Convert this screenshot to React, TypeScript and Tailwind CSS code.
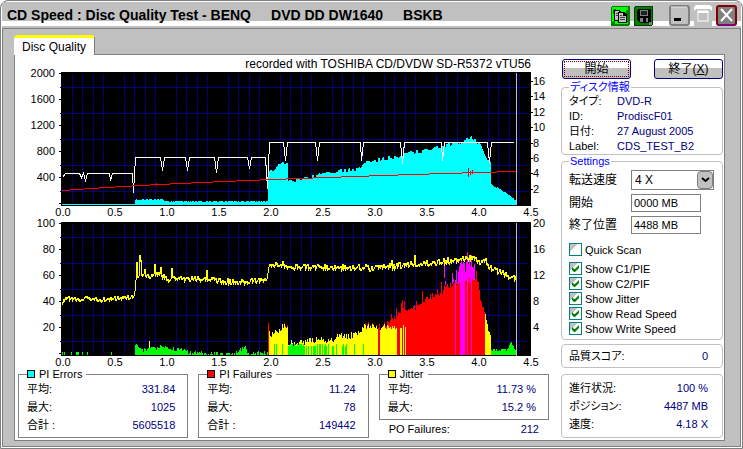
import { useState, type ReactNode } from "react";

type Point = [number, number];

const noise = (n: number) => {
  const s = Math.sin(n * 127.1 + 11.7) * 43758.5453;
  return s - Math.floor(s);
};

const sample = (points: Point[], x: number) => {
  for (let i = 1; i < points.length; i++) {
    const [x1, y1] = points[i];
    if (x <= x1) {
      const [x0, y0] = points[i - 1];
      return y0 + ((y1 - y0) * (x - x0)) / Math.max(1, x1 - x0);
    }
  }
  return points[points.length - 1][1];
};

const PLOT_LEFT = 62;
const PLOT_END = 516;
const TOP_BASE = 205;
const BOTTOM_BASE = 355;

const piErrors: Point[] = [
  [62, 204], [134, 204], [135, 200], [163, 200], [164, 202], [267, 202], [268, 172], [274, 171],
  [278, 166], [287, 162], [288, 182], [292, 181], [300, 179], [310, 177], [320, 174], [330, 172],
  [340, 171], [350, 170], [358, 168], [365, 162], [375, 161], [385, 158], [393, 158], [400, 155],
  [420, 151], [435, 148], [450, 144], [460, 142], [465, 140], [471, 137], [475, 140], [480, 146],
  [485, 155], [490, 164], [491, 185], [495, 188], [500, 190], [508, 196], [516, 201],
];

const writeSpeed =
  "62,177 65,173 79,173 81,177 83,173 85,180 87,173 109,173 110,180 112,173 132,173 133,192 135,157 160,157 162,170 164,157 185,157 187,170 189,157 214,157 216,172 218,157 247,157 249,168 251,157 265,157 267,188 269,142 283,142 285,160 287,142 315,142 317,160 319,142 360,142 361,160 363,142 400,142 402,163 404,142 441,142 442,160 444,142 487,142 489,162 491,142 513,142";

const readSpeed: Point[] = [
  [62, 190], [90, 188], [122, 186], [159, 184], [201, 182], [247, 180], [298, 178], [354, 176],
  [412, 174], [478, 172], [515, 171],
];

const jitter: Point[] = [
  [62, 301], [66, 298], [90, 298], [100, 299], [133, 296], [136, 276], [145, 276], [155, 273],
  [160, 273], [166, 280], [171, 276], [180, 278], [210, 278], [222, 281], [245, 281], [266, 280],
  [268, 266], [275, 264], [290, 266], [330, 267], [380, 267], [400, 265], [430, 262], [450, 260],
  [470, 257], [480, 260], [485, 261], [492, 269], [500, 272], [505, 274], [516, 278],
];

const jitterPeaks: Record<number, number> = {
  136: 262, 139: 255, 140: 260, 144: 269, 154: 264, 160: 267, 171: 268, 206: 270, 282: 261,
  391: 260, 414: 255, 469: 255,
};

const failures: Point[] = [
  [268, 330], [269, 333], [274, 334], [280, 328], [287, 325], [288, 344], [303, 342], [310, 340],
  [330, 340], [340, 336], [350, 336], [360, 331], [366, 325], [380, 327], [388, 322], [395, 316],
  [400, 311], [415, 308], [420, 302], [430, 296], [440, 295], [445, 287], [455, 282], [465, 279],
  [473, 277], [478, 285], [480, 300], [485, 312], [487, 325], [490, 332],
];

const lowFailures: Point[] = [
  [134, 355], [135, 344], [140, 349], [145, 350], [150, 347], [155, 349], [160, 345], [170, 348],
  [175, 350], [185, 349], [188, 353], [222, 353], [236, 352], [245, 347], [247, 353], [262, 353],
];

const peakFailures: Record<number, number> = {
  444: 264, 445: 285, 452: 273, 453: 279, 455: 280, 456: 270, 457: 282, 458: 272, 459: 266,
  460: 263, 461: 260, 462: 264, 463: 262, 464: 263, 465: 272, 466: 262, 467: 252, 468: 264,
  469: 260, 470: 266, 471: 255, 472: 267, 473: 268, 474: 264,
};

const greenFront = new Set([274, 276, 282, 328, 332, 333, 336, 342, 343, 345, 346, 354, 363]);
const fullMagenta = new Set([455, 460, 461, 462, 463, 464, 467, 471]);
const redFront = new Set([268, 378, 379, 397, 398, 399, 402, 404]);

const bar = (x: number, top: number, bottom: number) => `M${x} ${Math.round(top)}V${bottom}`;

function buildErrors() {
  let d = "";
  for (let x = PLOT_LEFT; x < PLOT_END; x++) {
    const rough = x > 267 && x < 491 ? (noise(x >> 1) - 0.5) * 4 : x > 134 ? -noise(x) * 1.4 : 0;
    d += bar(x, sample(piErrors, x) + rough, TOP_BASE);
  }
  return d;
}

function buildFailures() {
  const out = { green: "", yellow: "", red: "", magenta: "" };
  for (let x = 62; x < PLOT_END; x++) {
    const r = noise(x * 3);
    if (x < 135) {
      if ([62, 64, 71, 76, 77, 78, 82, 87, 111].includes(x)) out.green += bar(x, 352, BOTTOM_BASE);
    } else if (x < 268) {
      if (x < 218 || x > 235 || r > 0.5) {
        out.green += bar(x, sample(lowFailures, x) + (r - 0.5) * 4, BOTTOM_BASE);
      }
    } else if (x > 490) {
      const hump = Math.abs(x - 511) < 4 ? (4 - Math.abs(x - 511)) * 2 : 0;
      out.green += bar(x, 350 - hump + (r - 0.5) * 3, BOTTOM_BASE);
    } else {
      const spike = noise(x * 7) > 0.8 && x > 388 && x < 478 ? 9 : 0;
      const top = x === 268 ? 323 : sample(failures, x) + (r - 0.5) * 7 - spike;
      const yellow = (x < 406 && !redFront.has(x)) || x > 484;
      const yellowTop = x < 406 ? Math.max(top, 324 + Math.round(r * 5)) : top;
      if (!yellow || top < yellowTop) out.red += bar(x, top, BOTTOM_BASE);
      if (yellow) out.yellow += bar(x, yellowTop, BOTTOM_BASE);
      const green = (x > 287 && x < 304) || (x > 303 && x < 327 && r > 0.35) || greenFront.has(x);
      if (green) out.green += bar(x, 344 + (r > 0.6 ? 2 : 0), BOTTOM_BASE);
      const peak = peakFailures[x];
      if (peak) out.magenta += bar(x, peak, fullMagenta.has(x) ? BOTTOM_BASE : Math.round(278 + r * 6));
    }
  }
  out.yellow += bar(149, 341, 350);
  return out;
}

function buildJitter() {
  let d = "";
  let prev = 302;
  for (let x = PLOT_LEFT; x < PLOT_END; x++) {
    const size = x < 134 ? 4 : 6;
    const y = Math.round(jitterPeaks[x] ?? sample(jitter, x) + (noise(x * 5) - 0.5) * size);
    d += `M${x} ${Math.min(prev, y)}V${Math.max(prev, y + 2)}`;
    prev = y;
  }
  return d;
}

function buildReadSpeed() {
  let d = "";
  for (let x = PLOT_LEFT; x < PLOT_END; x++) {
    const y = Math.round(sample(readSpeed, x));
    d += `M${x} ${y}v1`;
  }
  return d;
}

const errorsPath = buildErrors();
const failurePaths = buildFailures();
const jitterPath = buildJitter();
const readPath = buildReadSpeed();

const columns = Array.from({ length: 45 }, (_, i) => i).filter((i) => i % 5 !== 0);
const rows = [0, 1, 2, 3, 4, 5];

function Grid({ top }: { top: number }) {
  return (
    <g shapeRendering="crispEdges">
      <rect x="61" y={top} width="470" height="134" fill="#000" />
      {columns.map((i) => (
        <rect key={i} x={Math.floor(62 + i * 10.4)} y={top + 2} width="1" height="131" fill="#000080" />
      ))}
      {rows.map((i) => (
        <g key={i}>
          <rect x="59" y={top + 1 + i * 26} width="472" height="1" fill="#000" />
          {i < 5 && <rect x="60" y={top + 15 + i * 26} width="469" height="1" fill="#000080" />}
        </g>
      ))}
    </g>
  );
}

function AxisX({ y }: { y: number }) {
  return (
    <g textAnchor="middle">
      {["0.0", "0.5", "1.0", "1.5", "2.0", "2.5", "3.0", "3.5", "4.0", "4.5"].map((t, i) => (
        <text key={t} x={63 + i * 52} y={y}>
          {t}
        </text>
      ))}
    </g>
  );
}

function Charts() {
  return (
    <svg
      viewBox="15 55 546 313"
      className="block w-full overflow-visible fill-black"
      role="img"
      aria-label="PI Errors, PI Failures and Jitter"
    >
      <text x="531" y="68" textAnchor="end" className="text-xs">
        recorded with TOSHIBA CD/DVDW SD-R5372 vTU56
      </text>
      <Grid top={72} />
      <Grid top={222} />
      <g textAnchor="end">
        {["2000", "1600", "1200", "800", "400"].map((t, i) => (
          <text key={t} x="55" y={77 + i * 26}>{t}</text>
        ))}
        {["100", "80", "60", "40", "20"].map((t, i) => (
          <text key={t} x="55" y={227 + i * 26}>{t}</text>
        ))}
      </g>
      {["16", "14", "12", "10", "8", "6", "4", "2"].map((t, i) => (
        <g key={t}>
          <rect x="531" y={Math.round(81 + i * 15.4)} width="2" height="1" />
          <text x="533" y={Math.round(85 + i * 15.4)}>{t}</text>
        </g>
      ))}
      {["20", "16", "12", "8", "4"].map((t, i) => (
        <text key={t} x="533" y={227 + i * 26}>{t}</text>
      ))}
      <AxisX y={216} />
      <AxisX y={366} />
      <g fill="none" strokeWidth="1" shapeRendering="crispEdges" transform="translate(0.5 0)">
        <path d={errorsPath} stroke="#00ffff" />
        <polyline points={writeSpeed} stroke="#fff" transform="translate(0 0.5)" />
        <path d={readPath} stroke="#ff0000" />
        <path d="M468 168V177M470 171V175M472 170V174M156 183V186" stroke="#ff0000" />
        <path d={failurePaths.red} stroke="#ff0000" />
        <path d={failurePaths.yellow} stroke="#ffff00" />
        <path d={failurePaths.green} stroke="#00ff00" />
        <path d={failurePaths.magenta} stroke="#ff00ff" />
        <path d={jitterPath} stroke="#ffff00" />
        <path d="M516 73V205M516 223V356" stroke="#c0c0c0" />
      </g>
    </svg>
  );
}

function Stat({ label, value }: { label: string; value: string }) {
  return (
    <div className="flex h-[18px] items-center justify-between">
      <dt>{label}</dt>
      <dd className="text-[#000080]">{value}</dd>
    </div>
  );
}

function StatBox({ title, swatch, children }: { title: string; swatch: string; children: ReactNode }) {
  return (
    <fieldset className="min-w-0 border border-[#808080] px-2 pb-[3px]">
      <legend className="flex h-3 items-center gap-1 pr-1">
        <span className={`size-2 border border-black ${swatch}`} />
        {title}
      </legend>
      <dl className="pr-1">{children}</dl>
    </fieldset>
  );
}

function Group({ title, className, children }: { title?: string; className: string; children: ReactNode }) {
  return (
    <fieldset className={`min-w-0 rounded-[4px] border border-[#c0c0c0] pl-[7px] pr-2 ${className}`}>
      {title && <legend className="h-3 px-px text-[#0000ff]">{title}</legend>}
      {children}
    </fieldset>
  );
}

function Info({ label, value }: { label: string; value: string }) {
  return (
    <div className="flex h-[15px] items-center">
      <dt className="w-12">{label}</dt>
      <dd className="whitespace-nowrap text-[#000080]">{value}</dd>
    </div>
  );
}

function Check({ label, initial = true }: { label: string; initial?: boolean }) {
  const [on, setOn] = useState(initial);
  return (
    <label className="flex h-[15px] items-center gap-[3px]">
      <span className="grid size-[13px]">
        <input
          type="checkbox"
          checked={on}
          onChange={() => setOn(!on)}
          className="col-start-1 row-start-1 size-[13px] appearance-none border border-[#008080] bg-white bg-linear-to-br from-[#c0c0c0] from-35% to-white to-35%"
        />
        {on && (
          <svg
            viewBox="0 0 13 13"
            className="pointer-events-none col-start-1 row-start-1 size-[13px]"
            aria-hidden="true"
          >
            <path d="M3 5v3l2 2h1l4-4V3L6 7H5z" fill="#008000" />
          </svg>
        )}
      </span>
      {label}
    </label>
  );
}

function PushButton({ focused, children }: { focused?: boolean; children: ReactNode }) {
  return (
    <button
      type="button"
      className="h-5 w-[69px] rounded-[3px] border border-[#000080] bg-linear-to-b from-white from-45% to-[#c0c0c0] to-45% p-px text-xs leading-3"
    >
      <span
        className={`flex h-full items-center justify-center border ${focused ? "border-dotted border-[#800000]" : "border-transparent"}`}
      >
        {children}
      </span>
    </button>
  );
}

function TitleBar() {
  return (
    <header className="mb-[2px] flex h-6 items-start justify-between border-b-[5px] border-white bg-[#c0c0c0] pl-[5px] pr-1">
      <h1 className="flex items-center gap-5 whitespace-nowrap pt-[5px] text-sm leading-4 font-bold">
        <span>CD Speed : Disc Quality Test - BENQ</span>
        <span>DVD DD DW1640</span>
        <span>BSKB</span>
      </h1>
      <div className="flex pt-[3px]">
        <button type="button" aria-label="Copy" className="mr-1">
          <svg viewBox="0 0 19 20" className="h-5 w-[19px]" shapeRendering="crispEdges">
            <rect width="19" height="20" rx="2" fill="#008000" />
            <path d="M1 1h16v3h-2v12h2v2H3l-2-2z" fill="#00ff00" />
            <path d="M2 3h3v1H3v4H2zM1 16l3-2v4z" fill="#008000" />
            <path d="M3 4h5l2 2v9H3z" fill="#000" />
            <path d="M4 5h4v9H4z" fill="#c0c0c0" />
            <path d="M7 6h6l3 3v8H7z" fill="#000" />
            <path d="M8 7h4v3h3v6H8z" fill="#c0c0c0" />
            <path d="M9 9h2v1H9zM9 11h5v1H9zM9 13h5v1H9zM5 7h2v1H5zM5 9h2v1H5z" fill="#404040" />
          </svg>
        </button>
        <button type="button" aria-label="Save" className="mr-4">
          <svg viewBox="0 0 19 20" className="h-5 w-[19px]" shapeRendering="crispEdges">
            <rect width="19" height="20" rx="2" fill="#004000" />
            <rect x="1" y="1" width="17" height="18" fill="#008000" />
            <path d="M4 3h13v14H6l-3-3V4z" fill="#000" />
            <path d="M6 4h8v6H6zM6 12h3v4H6zM12 12h2v4h-2zM15 16h3v3h-3z" fill="#808080" />
            <path d="M7 5h6v4H7z" fill="#202020" />
          </svg>
        </button>
        <button type="button" aria-label="Minimize" className="mr-1">
          <svg viewBox="0 0 21 21" className="size-[21px]">
            <rect x="1" y="1" width="19" height="19" rx="2" fill="#c0c0c0" stroke="#808080" strokeWidth="2" />
            <path d="M2 2h16" stroke="#e8e8e8" />
            <rect x="5" y="13" width="7" height="3" />
          </svg>
        </button>
        <button type="button" aria-label="Maximize" className="mr-1">
          <svg viewBox="0 0 18 21" className="h-[21px] w-[18px]">
            <rect y="2" width="18" height="19" fill="#c0c0c0" />
            <path d="M0 6V2l2-2h14l2 2v4l-2-2H2z" fill="#fff" />
            <rect x="4" y="6" width="10" height="10" fill="#c0c0c0" stroke="#fff" />
            <path d="M4 7h10" stroke="#fff" strokeWidth="2" />
          </svg>
        </button>
        <button type="button" aria-label="Close">
          <svg viewBox="0 0 21 21" className="size-[21px]">
            <rect x="1" y="1" width="19" height="19" rx="2" fill="#808080" stroke="#800000" strokeWidth="2" />
            <path d="M2 20h17" stroke="#800080" strokeWidth="2" />
            <path d="M5 4l11 12M16 4L5 16" stroke="#fff" strokeWidth="2" />
          </svg>
        </button>
      </div>
    </header>
  );
}

export default function App() {
  const [speed, setSpeed] = useState("4 X");
  return (
    <div className="flex min-h-screen flex-col rounded-t-lg border border-[#808080] bg-[#c0c0c0] font-['Liberation_Sans','Noto_Sans_CJK_JP',sans-serif] text-[11px] leading-3 text-black [font-feature-settings:'palt']">
      <div className="flex flex-1 flex-col rounded-t-lg border border-white">
        <TitleBar />
        <main className="flex flex-1 flex-col border border-[#808080] pt-[6px] pr-[15px] pb-[5px] pl-[11px]">
          <nav className="flex">
            <button
              type="button"
              className="relative z-10 -mb-px h-5 rounded-t-sm border-t-[3px] border-r border-t-[#ffff00] border-r-[#808080] bg-white px-2 text-xs leading-3"
            >
              Disc Quality
            </button>
          </nav>
          <div className="flex flex-1 border border-[#808080] bg-white">
            <section className="min-w-0 flex-1">
              <Charts />
              <div className="grid grid-cols-3 gap-[10px] pr-3 pl-[3px]">
                <StatBox title="PI Errors" swatch="bg-[#00ffff]">
                  <Stat label="平均:" value="331.84" />
                  <Stat label="最大:" value="1025" />
                  <Stat label="合計 :" value="5605518" />
                </StatBox>
                <StatBox title="PI Failures" swatch="bg-[#ff0000]">
                  <Stat label="平均:" value="11.24" />
                  <Stat label="最大:" value="78" />
                  <Stat label="合計 :" value="149442" />
                </StatBox>
                <div>
                  <StatBox title="Jitter" swatch="bg-[#ffff00]">
                    <Stat label="平均:" value="11.73 %" />
                    <Stat label="最大:" value="15.2 %" />
                  </StatBox>
                  <dl className="px-[10px]">
                    <Stat label="PO Failures:" value="212" />
                  </dl>
                </div>
              </div>
            </section>
            <aside className="w-[163px] pt-1 pr-px">
              <div className="flex justify-between pl-px">
                <PushButton focused>開始</PushButton>
                <PushButton>
                  終了(<u>X</u>)
                </PushButton>
              </div>
              <Group title="ディスク情報" className="mt-[2px] pb-px">
                <dl>
                  <Info label="タイプ:" value="DVD-R" />
                  <Info label="ID:" value="ProdiscF01" />
                  <Info label="日付:" value="27 August 2005" />
                  <Info label="Label:" value="CDS_TEST_B2" />
                </dl>
              </Group>
              <Group title="Settings" className="pb-[3px]">
                <div className="grid grid-cols-[62px_1fr] items-center gap-y-1 pt-[3px] text-xs leading-3">
                  <label htmlFor="speed">転送速度</label>
                  <div className="grid">
                    <select
                      id="speed"
                      value={speed}
                      onChange={(e) => setSpeed(e.target.value)}
                      className="col-start-1 row-start-1 h-5 appearance-none border border-[#808080] bg-white pl-[3px]"
                    >
                      <option>4 X</option>
                      <option>8 X</option>
                    </select>
                    <span className="pointer-events-none col-start-1 row-start-1 m-px grid w-4 place-items-center justify-self-end rounded-sm border border-[#808080] bg-[#c0c0c0]">
                      <svg viewBox="0 0 9 6" className="h-[6px] w-[9px]" aria-hidden="true">
                        <path d="M1 1l3.500 3L8 1" fill="none" stroke="#000" strokeWidth="2" />
                      </svg>
                    </span>
                  </div>
                  <label htmlFor="start">開始</label>
                  <input id="start" defaultValue="0000 MB" className="h-[18px] w-[70px] border border-[#808080] px-[2px] text-[11px]" />
                  <label htmlFor="end">終了位置</label>
                  <input id="end" defaultValue="4488 MB" className="h-[18px] w-[70px] border border-[#808080] px-[2px] text-[11px]" />
                </div>
                <div className="pt-2">
                  <Check label="Quick Scan" initial={false} />
                </div>
                <div className="pt-1">
                  <Check label="Show C1/PIE" />
                  <Check label="Show C2/PIF" />
                  <Check label="Show Jitter" />
                  <Check label="Show Read Speed" />
                  <Check label="Show Write Speed" />
                </div>
              </Group>
              <Group className="mt-1 py-[2px]">
                <dl className="pr-[6px]">
                  <Stat label="品質スコア:" value="0" />
                </dl>
              </Group>
              <Group className="mt-[6px] py-1">
                <dl className="pr-[6px]">
                  <Stat label="進行状況:" value="100 %" />
                  <Stat label="ポジション:" value="4487 MB" />
                  <Stat label="速度:" value="4.18 X" />
                </dl>
              </Group>
            </aside>
          </div>
        </main>
      </div>
    </div>
  );
}
